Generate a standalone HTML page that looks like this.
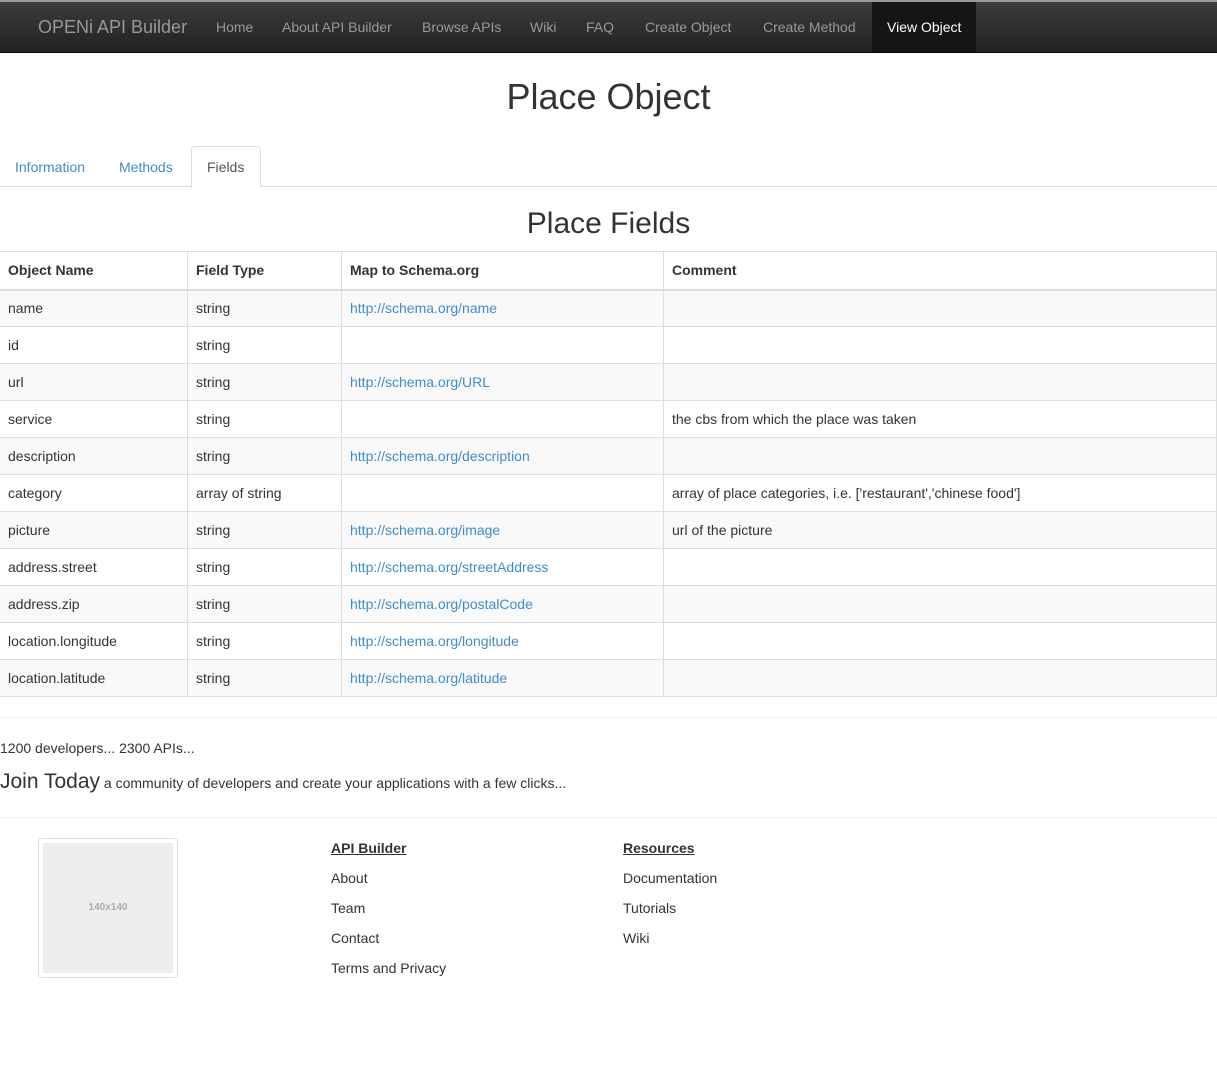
<!DOCTYPE html>
<html><head><meta charset="utf-8"><style>
*{box-sizing:border-box}
body{margin:0;font-family:"Liberation Sans",Arial,sans-serif;font-size:14px;color:#333;background:#fff;width:1217px;height:1073px;overflow:hidden;position:relative}
.nav{position:absolute;top:0;left:0;width:1217px;height:53px;background:linear-gradient(#3c3c3c,#222);border-top:2px solid #999;border-bottom:1px solid #080808}
.nav span{position:absolute;top:17px;color:#999;font-size:14px}
.nav .brand{font-size:18px;top:15px;left:38px}
.nav .act{left:872px;top:0;width:104px;height:50px;background:#151515;color:#fff;padding:17px 0 0 15px}
h1{position:absolute;top:76px;left:0;width:1217px;text-align:center;margin:0;font-weight:normal;font-size:36px;line-height:42px}
h2{position:absolute;top:207px;left:0;width:1217px;text-align:center;margin:0;font-weight:normal;font-size:30px;line-height:34px}
.tabs{position:absolute;top:186px;left:0;width:1217px;border-top:1px solid #ddd}
.tab{position:absolute;top:159px;color:#428bca}
.tabact{position:absolute;left:191px;top:146px;width:70px;height:42px;border:1px solid #ddd;border-bottom:1px solid #fff;border-radius:4px 4px 0 0;background:#fff;color:#555;padding:12px 0 0 15px}
table{position:absolute;top:251px;left:-1px;width:1218px;border-collapse:collapse}
td,th{border:1px solid #ddd;height:37px;padding:0 8px;text-align:left;vertical-align:middle}
th{height:38px;border-bottom:2px solid #ddd}
tr:nth-child(even) td{background:#f9f9f9}
a{color:#428bca;text-decoration:none}
.hr{position:absolute;left:0;width:1217px;border-top:1px solid #eee}
.f{position:absolute;font-size:14px}
.img{position:absolute;left:38px;top:838px;width:140px;height:140px;border:1px solid #ddd;border-radius:4px;padding:4px}
.img div{width:130px;height:130px;background:#eee;color:#aaa;font-size:10px;font-weight:bold;text-align:center;line-height:130px}
</style></head><body>
<div class="nav">
<span class="brand">OPENi API Builder</span>
<span style="left:216px">Home</span>
<span style="left:282px">About API Builder</span>
<span style="left:422px">Browse APIs</span>
<span style="left:530px">Wiki</span>
<span style="left:586px">FAQ</span>
<span style="left:645px">Create Object</span>
<span style="left:763px">Create Method</span>
<span class="act">View Object</span>
</div>
<h1>Place Object</h1>
<div class="tabs"></div>
<span class="tab" style="left:15px">Information</span>
<span class="tab" style="left:119px">Methods</span>
<div class="tabact">Fields</div>
<h2>Place Fields</h2>
<table>
<colgroup><col style="width:188px"><col style="width:154px"><col style="width:322px"><col></colgroup>
<tr><th>Object Name</th><th>Field Type</th><th>Map to Schema.org</th><th>Comment</th></tr>
<tr><td>name</td><td>string</td><td><a>http://schema.org/name</a></td><td></td></tr>
<tr><td>id</td><td>string</td><td></td><td></td></tr>
<tr><td>url</td><td>string</td><td><a>http://schema.org/URL</a></td><td></td></tr>
<tr><td>service</td><td>string</td><td></td><td>the cbs from which the place was taken</td></tr>
<tr><td>description</td><td>string</td><td><a>http://schema.org/description</a></td><td></td></tr>
<tr><td>category</td><td>array of string</td><td></td><td>array of place categories, i.e. ['restaurant','chinese food']</td></tr>
<tr><td>picture</td><td>string</td><td><a>http://schema.org/image</a></td><td>url of the picture</td></tr>
<tr><td>address.street</td><td>string</td><td><a>http://schema.org/streetAddress</a></td><td></td></tr>
<tr><td>address.zip</td><td>string</td><td><a>http://schema.org/postalCode</a></td><td></td></tr>
<tr><td>location.longitude</td><td>string</td><td><a>http://schema.org/longitude</a></td><td></td></tr>
<tr><td>location.latitude</td><td>string</td><td><a>http://schema.org/latitude</a></td><td></td></tr>
</table>
<div class="hr" style="top:717px"></div>
<div class="f" style="left:0;top:740px">1200 developers... 2300 APIs...</div>
<div class="f" style="left:0;top:770px"><span style="font-size:21px">Join Today</span> a community of developers and create your applications with a few clicks...</div>
<div class="hr" style="top:817px"></div>
<div class="img"><div>140x140</div></div>
<div class="f" style="left:331px;top:840px;font-weight:bold;text-decoration:underline">API Builder</div>
<div class="f" style="left:331px;top:870px">About</div>
<div class="f" style="left:331px;top:900px">Team</div>
<div class="f" style="left:331px;top:930px">Contact</div>
<div class="f" style="left:331px;top:960px">Terms and Privacy</div>
<div class="f" style="left:623px;top:840px;font-weight:bold;text-decoration:underline">Resources</div>
<div class="f" style="left:623px;top:870px">Documentation</div>
<div class="f" style="left:623px;top:900px">Tutorials</div>
<div class="f" style="left:623px;top:930px">Wiki</div>
</body></html>
